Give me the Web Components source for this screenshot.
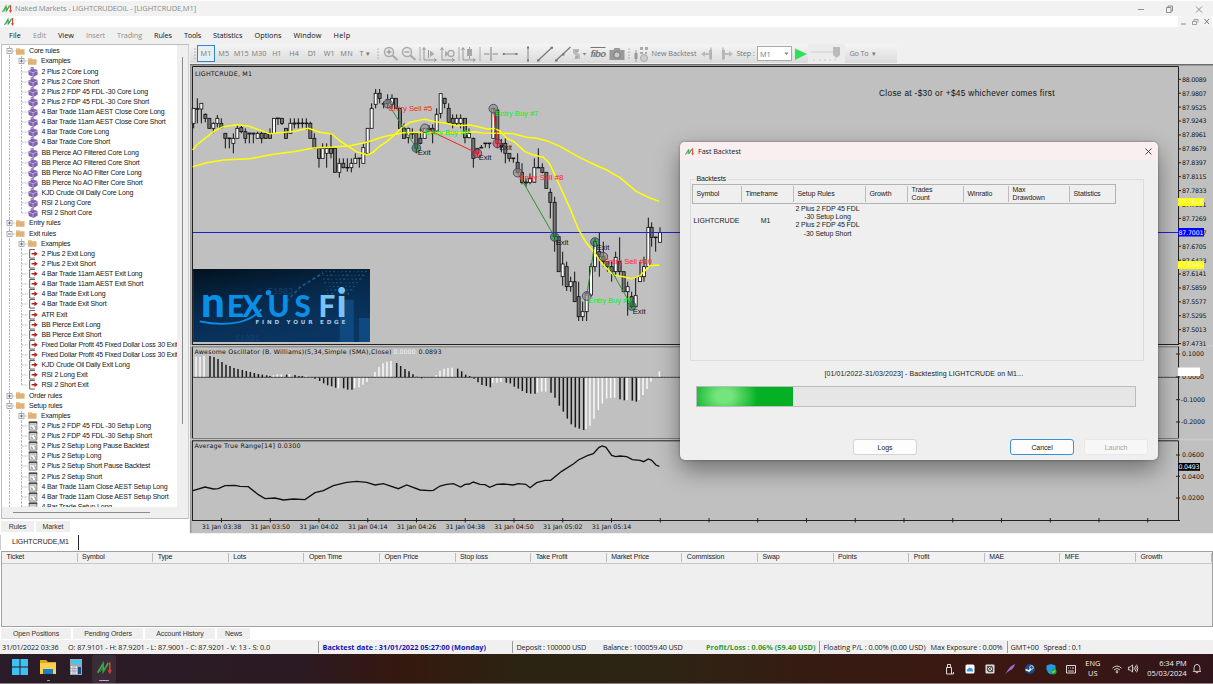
<!DOCTYPE html>
<html lang="en">
<head>
<meta charset="utf-8">
<title>Naked Markets</title>
<style>
    html, body{
        margin: 0;
        width: 1213px;
        height: 684px;
        overflow: hidden;
        background: #fff;
    }
    body{
        font-family: "Liberation Sans", Arial, sans-serif;
        font-size: 7px;
        color: #222;
    }
</style>
</head>
<body>
<trading-app></trading-app>
<script>
const UI = '"Open Sans", "Noto Sans", sans-serif'

// every element renders a style and some markup in an open root
class BaseElement extends HTMLElement{
    constructor(){
        super()
        this._shadowRoot = this.attachShadow({mode: 'open'})
    }
    connectedCallback(){
        this._shadowRoot.innerHTML = `<style>:host{display:block;box-sizing:border-box} *{box-sizing:border-box} ${this.css()}</style>${this.html()}`
        this.ready()
    }
    css(){ return '' }
    html(){ return '<slot></slot>' }
    ready(){}
}

// one line of text tracked to the width given in "w"
class FitText extends BaseElement{
    css(){
        return `:host{display:inline-block;white-space:pre;line-height:1.2;flex:none;width:${this.getAttribute('w')}px} span{display:inline-block;white-space:pre}`
    }
    html(){ return '<span><slot></slot></span>' }
    ready(){
        const span = this._shadowRoot.querySelector('span')
        const w = Number(this.getAttribute('w'))
        const n = this.textContent.length
        const real = span.getBoundingClientRect().width
        if(w && n && real) span.style.letterSpacing = ((w - real) / n).toFixed(3) + 'px'
    }
}
customElements.define('fit-text', FitText)

class AppLogo extends BaseElement{
    css(){ return ':host{width:10px;height:9px;flex:none} svg{display:block;width:100%;height:100%}' }
    html(){
        return `<svg viewBox="0 0 20 18" fill="none" stroke-width="2.2">
            <path d="M1 16 8 4 8.500 14 15 3" stroke="#3cae4b"/>
            <path d="M4 15 9 6M9 14 15 5" stroke="#2f8f3e" stroke-width="1.200"/>
            <path d="M17 2V16" stroke="#e33b2e"/><path d="M14.500 12 17 17 19.500 12" stroke="#e33b2e" stroke-width="1.200"/>
        </svg>`
    }
}
customElements.define('app-logo', AppLogo)

class TitleBar extends BaseElement{
    css(){
        return `.bar{display:flex;align-items:center;height:16px;background:#f2f2f2;border-top:1px solid #fff;padding:0 7px 0 2px;color:#8b8b8b;font:7.600px ${UI}}
        .bar fit-text{margin-left:3px}
        .mdi{display:flex;align-items:center;height:11px;background:#fff;padding:0 1px 0 4px}
        .right{margin-left:auto;display:block}
        .mdi .right{background:#f3f3f3}`
    }
    html(){
        return `<div class="bar"><app-logo></app-logo><fit-text w="181">Naked Markets - LIGHTCRUDEOIL - [LIGHTCRUDE,M1]</fit-text>
            <svg class="right" width="70" height="12" fill="none" stroke="#777" stroke-width=".8"><path d="M2 6.500h6"/><path d="M30.500 4.500h4.500v5h-4.500zM32 4.500V3h4.500v5H35M60 3.500l6 6M66 3.500l-6 6"/></svg></div>
        <div class="mdi"><app-logo></app-logo>
            <svg class="right" width="34" height="11" fill="none" stroke="#888"><path d="M3 8h5"/><path d="M14.500 5.500h4v3h-4zM16 5V3.500h4v3" stroke-width=".8"/><path d="M26.500 3l4.500 5M31 3l-4.500 5" stroke="#777"/></svg></div>`
    }
}
customElements.define('title-bar', TitleBar)

class MenuBar extends BaseElement{
    css(){
        return `:host{height:17px;background:#f0f0f0;padding:0 9px;font:7.300px ${UI};color:#111}
        nav{display:flex;gap:12px;height:17px;align-items:center}
        .off{color:#8e8e8e}`
    }
    html(){
        const items = [['File', 12], ['Edit', 13, 1], ['View', 16], ['Insert', 19, 1], ['Trading', 25, 1], ['Rules', 18], ['Tools', 17], ['Statistics', 29.5], ['Options', 27], ['Window', 28], ['Help', 17]]
        return `<nav>${items.map(i => `<fit-text w="${i[1]}" class="${i[2] ? 'off' : ''}">${i[0]}</fit-text>`).join('')}</nav>`
    }
}
customElements.define('menu-bar', MenuBar)

// ---- rules tree ----
const ICONS = {
    folder: '<path d="M0 1.500h4l1 1h5v6.500H0z" fill="#dfb377"/><path d="M1 2.500h2" stroke="#f3dcb8"/>',
    core: '<path d="M2.500.5 5.500 0 6 2 9.500 3 10 8 5.500 10.500.5 8.500 0 4 2.500 3z" fill="#7f61ad"/><path d="M.8 4.500 5 6l4.500-2M5 6v4M3 1.500l2.500.5" stroke="#d2c4ea" stroke-width=".7" fill="none"/>',
    exit: '<path d="M7 .5H1.500v9H7" stroke="#444" stroke-width=".9" fill="none"/><path d="M3.500 4.200h3V2.300L10 5 6.500 7.700V5.800h-3z" fill="#b3201c"/>',
    setup: '<path d="M1 1h8v8.500H1z" fill="#fff" stroke="#555" stroke-width=".8"/><path d="M.6 1.500h8.800" stroke="#444" stroke-width="1.800"/><path d="M3 5.500v3M3 7h1.500M4.500 7v1.500M6 5.500h1.500v3M2 4h6" stroke="#777" stroke-width=".7" fill="none"/>'
}
const names = (t, list) => list.map(n => [1, t, n])
const TREE = [
    [0, 'folder', 'Core rules', '-'], [1, 'folder', 'Examples', '+'],
    ...names('core', ['2 Plus 2 Core Long', '2 Plus 2 Core Short', '2 Plus 2 FDP 45 FDL -30 Core Long', '2 Plus 2 FDP 45 FDL -30 Core Short', '4 Bar Trade 11am AEST Close Core Long', '4 Bar Trade 11am AEST Close Core Short', '4 Bar Trade Core Long', '4 Bar Trade Core Short', 'BB Pierce AO Filtered Core Long', 'BB Pierce AO Filtered Core Short', 'BB Pierce No AO Filter Core Long', 'BB Pierce No AO Filter Core Short', 'KJD Crude Oil Daily Core Long', 'RSI 2 Long Core', 'RSI 2 Short Core']),
    [0, 'folder', 'Entry rules', '+'], [0, 'folder', 'Exit rules', '-'], [1, 'folder', 'Examples', '+'],
    ...names('exit', ['2 Plus 2 Exit Long', '2 Plus 2 Exit Short', '4 Bar Trade 11am AEST Exit Long', '4 Bar Trade 11am AEST Exit Short', '4 Bar Trade Exit Long', '4 Bar Trade Exit Short', 'ATR Exit', 'BB Pierce Exit Long', 'BB Pierce Exit Short', 'Fixed Dollar Profit 45 Fixed Dollar Loss 30 Exit', 'Fixed Dollar Profit 45 Fixed Dollar Loss 30 Exit', 'KJD Crude Oil Daily Exit Long', 'RSI 2 Long Exit', 'RSI 2 Short Exit']),
    [0, 'folder', 'Order rules', '+'], [0, 'folder', 'Setup rules', '-'], [1, 'folder', 'Examples', '+'],
    ...names('setup', ['2 Plus 2 FDP 45 FDL -30 Setup Long', '2 Plus 2 FDP 45 FDL -30 Setup Short', '2 Plus 2 Setup Long Pause Backtest', '2 Plus 2 Setup Long', '2 Plus 2 Setup Short Pause Backtest', '2 Plus 2 Setup Short', '4 Bar Trade 11am Close AEST Setup Long', '4 Bar Trade 11am Close AEST Setup Short', '4 Bar Trade Setup Long'])
]

class TreeRow extends BaseElement{
    css(){
        return `:host{height:10.125px;display:flex;align-items:center;white-space:nowrap;letter-spacing:-.18px;color:#151515}
        svg{flex:none;display:block} .lines{width:14px;height:10.125px} :host([level="1"]) .lines{width:26px}
        .icon{width:9px;height:9px} :host([icon="core"]) .icon,:host([icon="exit"]) .icon,:host([icon="setup"]) .icon{width:10.500px;height:10px}
        span{margin-left:4px;line-height:10px} :host([level="1"]) span{margin-left:3px} :host([icon="folder"][level="1"]) span{margin-left:4px}`
    }
    html(){
        const level = Number(this.getAttribute('level'))
        const sign = this.getAttribute('sign')
        const x = 7.5 + level * 12
        const box = sign ? `<rect x="${x - 2.5}" y="2.500" width="5" height="5" fill="#fff" stroke="#9a9a9a" stroke-width=".8"/><path d="M${x - 1.5} 5h3${sign === '+' ? `M${x} 3.500v3` : ''}" stroke="#3450a0" stroke-width=".8"/>` : ''
        return `<svg class="lines"><path d="M7.500 0v10.200M${x} 0V${this.hasAttribute('last') ? 5 : 10.2}M${x} 5h7" stroke="#aaa" stroke-width=".8" stroke-dasharray="2 1" fill="none"/>${box}</svg>
            <svg class="icon" viewBox="0 0 10.500 10.500">${ICONS[this.getAttribute('icon')]}</svg><span><slot></slot></span>`
    }
}
customElements.define('tree-row', TreeRow)

class RulesPanel extends BaseElement{
    css(){
        return `:host{width:189px;height:490px;background:#fff;padding-left:1px;flex:none}
        .frame{width:188px;height:475px;background:#efefef;border:1px solid #bdbdbd;border-right-color:#cfcfcf;display:grid;grid-template-columns:175px 1fr;grid-template-rows:462px 1fr}
        .tree{background:#fff;overflow:hidden;padding-top:1.300px}
        .v{width:1.500px;height:367px;background:#8a8a8a;margin:12px 0 0 4.500px}
        .h{width:137px;height:1.300px;background:#8a8a8a;margin:5px 0 0 11px}
        tab-strip{margin-top:1px}`
    }
    html(){
        return `<div class="frame"><div class="tree">${TREE.map((r, i) => `<tree-row level="${r[0]}" icon="${r[1]}" ${r[3] ? `sign="${r[3]}"` : ''} ${r[0] && !(TREE[i + 1] || [1])[0] ? 'last' : ''}>${r[2]}</tree-row>`).join('')}</div><div class="v"></div><div class="h"></div></div>
        <tab-strip tabs="Rules:33,Market:34"></tab-strip>`
    }
}

// tabs as "label:width", the first one is active
class TabStrip extends BaseElement{
    css(){
        return `:host{display:flex;height:13px;gap:2px;align-items:flex-start;color:#333}
        div{height:11.500px;background:#efefef;display:flex;align-items:center;justify-content:center;margin-top:.5px;letter-spacing:-.1px}
        div:first-child{background:#fff;height:12.500px;margin:0;border-bottom:1.300px solid #2f5fe0;border-right:1px solid #111;color:#111}`
    }
    html(){
        return this.getAttribute('tabs').split(',').map(t => t.split(':')).map(t => `<div style="width:${t[1]}px">${t[0]}</div>`).join('')
    }
}
customElements.define('tab-strip', TabStrip)
customElements.define('rules-panel', RulesPanel)

// ---- toolbar ----
const AXIS = '<path d="M2 2v12h12M.5 4 2 1.500 3.500 4M12 12.500 14.500 14 12 15.500" stroke="#999" fill="none"/>'
const TOOLS = {
    grip: '<path d="M2 2.500v12" stroke="#aaa" stroke-width="1.300" stroke-dasharray="1.300 1.700"/>',
    sep: '<path d="M2 1v14" stroke="#aaa"/>',
    zoomin: '<circle cx="6" cy="6" r="4.500" fill="#e8e8e8" stroke="#aaa" stroke-width="1.500"/><path d="M6 3.500v5M3.500 6h5" stroke="#888"/><path d="M9.500 9.500l5 4.500" stroke="#aaa" stroke-width="2.200"/>',
    zoomout: '<circle cx="6" cy="6" r="4.500" fill="#e8e8e8" stroke="#aaa" stroke-width="1.500"/><path d="M3.500 6h5" stroke="#888"/><path d="M9.500 9.500l5 4.500" stroke="#aaa" stroke-width="2.200"/>',
    shift: AXIS + '<path d="M6.500 4v8" stroke="#999"/><path d="M8 4.500 12.500 8 8 11z" fill="#aaa"/>',
    scroll: AXIS + '<path d="M5 4.500 9 8 5 11z" fill="#aaa"/><circle cx="11" cy="7.500" r="3" fill="none" stroke="#aaa" stroke-width="1.300"/>',
    candle: AXIS + '<path d="M8.500 1v12" stroke="#999"/><path d="M6 3h5v7H6z" fill="#a8a8a8"/>',
    cross: '<path d="M8 1v14M1 8h5.500M9.500 8H15" stroke="#888" stroke-width="1.100"/>',
    hline: '<path d="M2 8h12" stroke="#888"/><path d="M.8 7h2v2h-2zM13.500 7h2v2h-2z" fill="#777"/>',
    vline: '<path d="M8 2v12" stroke="#888"/><path d="M7 .5h2v2H7zM7 13.500h2v2H7z" fill="#777"/>',
    trend: '<path d="M1 14.500 15 1.500" stroke="#777" stroke-width="1.200"/><path d="M0 13.500h2.500v2H0zM13.500.8H16v2h-2.500z" fill="#777"/>',
    ray: '<path d="M1 14.500 15.500 1" stroke="#777" stroke-width="1.200"/><path d="M0 13.500h2.500v2H0zM7 7.500h2.500v2H7z" fill="#777"/>',
    shapes: '<path d="M1 3h6v3H5l3 3v4H2l2-3-3-3z" fill="#bbb"/><path d="M3 5h3M3 11h3" stroke="#999"/><path d="M10.500 7h4l-2 2.500z" fill="#888"/>',
    camera: '<path d="M.5 4h4l1-2h5l1 2h4v10H.5z" fill="#999"/><circle cx="8" cy="9" r="3.200" fill="#ccc" stroke="#777"/>',
    backtest: '<path d="M3 4v12" stroke="#999"/><path d="M1.500 7h3v6h-3z" fill="#999"/><path d="M7 1h3v3H7zM12 1h3v3h-3zM7 6h3v2H7zM12 6h2v2h-2z" fill="#aaa"/><circle cx="11" cy="12" r="3.500" fill="#ccc" stroke="#aaa"/>',
    prev: '<path d="M1 8l4-3v2h4V4h3v9H9V9H5v2z" fill="#bbb"/><path d="M11 1.500v13" stroke="#aaa"/>',
    next: '<path d="M15 8l-4-3v2H7V4H4v9h3V9h4v2z" fill="#bbb"/><path d="M5 1.500v13" stroke="#aaa"/>',
    play: '<path d="M2 2.500 14 8 2 14z" fill="#2be25a"/>'
}
class ToolBar extends BaseElement{
    css(){
        return `:host{height:20px;background:#f0f0f0}
        .bar{display:flex;align-items:center;height:19px;width:707px;background:linear-gradient(#f5f5f5,#dadada);padding-left:2px;font:7.300px ${UI};color:#777}
        .cell{flex:none;display:flex;align-items:center;justify-content:center;height:17px}
        .cell svg{display:block;width:16px;height:16px;flex:none}
        .on{border:1px solid #2f86d8;background:#e9eef3;height:17px}
        .fibo{font:italic bold 9.500px "Liberation Sans";color:#777;text-decoration:overline;letter-spacing:-.6px}
        .combo{display:flex;align-items:center;justify-content:space-between;width:35px;height:15px;border:1px solid #aaa;background:#fff;padding:0 2px}
        .combo svg{width:5px;height:5px}
        .slider{background:#ececec;height:19px}
        .slider svg{width:32px}`
    }
    html(){
        const cell = (w, body, cls = '') => `<div class="cell ${cls}" style="width:${w}px">${body}</div>`
        const icon = (w, name, vw = 16) => cell(w, `<svg viewBox="0 0 ${vw} 16" ${vw < 16 ? `style="width:${vw}px"` : ''}>${TOOLS[name]}</svg>`)
        const text = (w, t, tw) => cell(w, `<fit-text w="${tw}">${t}</fit-text>`)
        return `<div class="bar">${[
            icon(5, 'grip', 4), cell(18, '<fit-text w="11">M1</fit-text>', 'on'),
            text(17.5, 'M5', 11), text(17.5, 'M15', 15), text(18, 'M30', 15), text(17.5, 'H1', 9), text(17.5, 'H4', 10), text(17.5, 'D1', 8), text(17.5, 'W1', 11), text(17.5, 'MN', 13), text(19, 'T ▾', 11),
            icon(7, 'grip', 4), icon(18, 'zoomin'), icon(18, 'zoomout'), icon(4, 'sep', 4), icon(17, 'shift'), icon(18, 'scroll'), icon(4, 'sep', 4), icon(17, 'candle'), icon(5, 'sep', 4),
            icon(17, 'cross'), icon(20, 'hline'), icon(16, 'vline'), icon(19, 'trend'), icon(17, 'ray'), icon(17, 'shapes'),
            cell(19, '<span class="fibo">fibo</span>'), icon(18, 'camera'), icon(7, 'grip', 4), icon(17, 'backtest'), text(49, 'New Backtest', 45), icon(18, 'prev'), icon(19, 'next'), text(20, 'Step :', 18),
            cell(38, '<div class="combo"><span>M1</span><svg viewBox="0 0 5 5"><path d="M.5 1.500h4l-2 2.500z" fill="#777"/></svg></div>'),
            icon(14, 'play'), cell(37, '<svg viewBox="0 0 32 16"><path d="M1 5h24v2H1z" fill="#ddd"/><path d="M4 13v2M10 13v2M15 13v2M20 13v2M25 13v2" stroke="#ccc"/><path d="M23 1h7v8l-3.500 3L23 9z" fill="#bbb"/></svg>', 'slider'), text(36, 'Go To  ▾', 26)
        ].join('')}</div>`
    }
}
customElements.define('tool-bar', ToolBar)

// ---- chart: coordinates are thirds of a pixel measured from the chart's corner ----
// x, high, low, body top, body bottom, w = up bar, g = down bar
const CANDLES = `11 130 190 130 175 w|22 100 175 131 133 g|34 115 175 115 132 w|46 145 172 148 160 g|58 160 190 160 190 g|70 172 205 175 190 w|82 150 187 160 175 w|94 160 190 175 188 g|106 205 250 205 220 g|118 220 250 219 221 g|130 205 265 220 235 w|142 180 220 190 220 w|154 180 205 188 200 g|166 190 235 200 220 g|178 205 235 204 207 g|190 205 235 204 207 g|203 200 220 205 220 w|215 200 235 205 220 g|227 200 222 205 220 g|240 190 220 205 220 g|252 160 205 160 205 w|264 160 180 159 161 g|276 160 180 160 175 g|288 190 222 190 220 g|301 160 205 175 205 w|313 160 190 174 177 g|325 160 190 174 176 g|337 160 188 174 176 g|349 160 195 174 176 g|361 170 222 175 220 g|373 205 250 220 250 g|387 248 308 250 280 g|398 235 280 250 280 w|410 235 308 250 265 w|423 205 280 250 265 g|435 250 322 250 322 g|448 280 338 295 322 w|460 280 310 295 308 g|472 280 320 307 309 g|484 280 322 295 308 w|496 265 295 280 295 w|508 280 308 279 281 g|520 235 295 248 295 w|533 190 265 190 265 w|545 115 190 130 190 w|557 72 130 85 118 w|569 72 115 85 100 g|581 110 130 115 118 g|593 88 130 104 116 g|606 88 130 100 118 w|618 100 130 100 130 g|630 130 190 130 190 g|642 175 222 190 220 g|655 188 235 190 218 w|667 190 222 204 207 g|679 205 265 205 250 g|691 190 238 220 235 g|704 190 220 190 220 w|717 180 205 190 193 g|728 178 235 190 205 g|740 130 200 148 198 w|752 86 160 86 145 w|764 98 130 100 115 g|776 115 175 130 172 g|788 148 190 160 175 g|800 148 180 160 175 w|812 148 190 160 175 w|825 160 235 160 218 g|837 190 220 205 218 w|850 218 308 220 280 g|862 250 275 250 265 g|874 240 250 247 249 g|886 235 248 234 236 g|898 235 250 234 236 g|910 130 220 130 220 w|922 135 250 135 235 g|934 222 262 235 245 g|946 220 295 235 265 g|958 265 290 265 280 g|970 280 293 279 281 g|983 265 325 292 322 g|996 295 358 322 352 g|1008 340 365 351 354 g|1020 325 358 340 352 w|1033 280 352 308 352 w|1045 250 308 307 309 g|1057 295 325 308 322 g|1069 322 370 322 370 g|1081 370 460 382 412 g|1094 395 560 412 515 g|1106 515 620 515 620 g|1118 560 662 597 635 w|1130 590 678 605 665 g|1142 635 680 650 665 w|1154 620 710 650 710 g|1166 650 768 695 755 g|1178 710 768 740 755 w|1190 680 768 685 740 w|1203 595 695 605 690 w|1215 520 620 530 605 w|1228 503 635 560 575 g|1240 530 605 575 590 g|1252 590 620 590 605 g|1265 590 650 605 620 g|1277 560 635 577 620 w|1289 517 635 590 620 g|1301 620 680 620 680 g|1313 650 752 665 680 w|1325 680 730 695 725 g|1337 635 725 692 725 w|1350 590 650 635 650 w|1362 575 650 605 635 w|1375 458 605 487 605 w|1385 472 545 487 517 g|1397 517 560 516 518 g|1410 487 532 503 532 w`
const FAST = '8,255 20,240 45,220 75,197 100,185 142,179 175,183 205,194 240,206 270,203 315,199 355,190 390,202 425,207 450,228 470,241 500,260 530,269 548,263 570,243 590,230 615,208 635,188 660,172 705,163 735,170 770,175 800,182 840,180 870,187 895,193 912,190 930,198 950,220 972,230 1005,260 1030,270 1060,277 1078,295 1090,320 1115,375 1140,430 1165,492 1190,535 1215,565 1240,600 1270,630 1300,635 1325,641 1350,632 1380,602 1408,600'
const SLOW = '8,305 50,293 100,285 180,281 250,268 310,260 370,249 430,246 480,242 530,232 580,215 640,203 690,202 750,203 820,203 855,200 880,204 925,205 970,206 1010,217 1040,220 1075,229 1110,244 1170,278 1210,297 1250,315 1290,338 1340,380 1380,399 1408,409'
const ATR = '9,1277 45,1266 70,1272 85,1271 105,1262 135,1261 150,1264 175,1265 205,1289 225,1301 255,1299 280,1305 310,1302 345,1304 375,1283 400,1277 430,1262 470,1252 500,1249 530,1252 555,1260 580,1256 625,1271 650,1260 690,1275 720,1277 730,1276 750,1263 770,1258 790,1256 812,1266 825,1258 838,1257 850,1251 870,1258 885,1259 899,1267 920,1258 940,1257 970,1260 985,1256 1007,1258 1020,1268 1040,1253 1065,1246 1082,1246 1115,1219 1150,1197 1165,1185 1192,1172 1210,1166 1227,1147 1237,1143 1248,1147 1265,1171 1277,1175 1290,1173 1310,1175 1327,1184 1350,1186 1361,1190 1375,1182 1385,1186 1398,1200 1408,1204'
// x, end y of the bar, w or k (rising, falling)
const AO = `18 875 w|30 875 w|42 873 w|60 873 k|72 876 k|84 882 k|96 891 k|108 899 k|120 903 k|132 909 k|144 912 k|157 915 k|169 918 k|181 921 k|193 924 k|205 927 k|217 929 k|230 931 k|240 933 k|250 931 w|262 928 w|274 928 w|290 929 k|298 927 w|315 930 k|327 933 k|337 933 k|348 932 w|375 941 k|389 948 k|401 955 k|413 961 k|425 964 k|437 968 k|445 970 w|461 970 k|473 974 k|486 974 k|494 969 w|507 967 w|519 959 w|531 951 w|555 921 w|567 906 w|579 895 w|591 890 w|603 888 w|620 894 k|632 903 k|645 912 k|657 919 k|669 928 k|681 935 k|695 940 k|738 930 w|750 917 w|762 911 w|774 909 w|786 908 w|803 911 k|815 919 k|827 929 k|839 933 k|852 941 k|864 952 k|876 960 k|889 963 k|901 967 k|908 954 w|921 953 w|933 951 w|949 953 k|961 955 k|973 965 k|985 971 k|997 978 k|1010 984 k|1022 986 k|1035 986 k|1042 983 w|1055 980 w|1067 980 w|1083 983 k|1095 998 k|1108 1022 k|1120 1040 k|1132 1061 k|1144 1078 k|1156 1087 k|1168 1091 k|1181 1095 k|1188 1092 w|1200 1082 w|1212 1061 w|1225 1035 w|1237 1016 w|1250 1001 w|1262 999 w|1274 998 w|1290 1003 k|1303 1006 k|1311 1005 w|1327 1007 k|1339 1010 k|1347 1005 w|1359 990 w|1371 972 w|1383 950 w|1396 935 w|1408 919 w`
// trade lines: entry x y, exit x y, colour
const TRADES = [[594, 116, 679, 249, '#2f8f2f'], [705, 190, 862, 265, '#f02020'], [910, 131, 922, 235, '#f02020'], [983, 323, 1094, 516, '#2f8f2f'], [1190, 693, 1215, 531, '#2f8f2f'], [1240, 575, 1325, 723, '#2f8f2f']]
const LABELS = [[597, 137, 'Entry Sell #5', '#ff2020', 130], [706, 211, 'Entry Buy #6', '#00f020', 130], [916, 152, 'Entry Buy #7', '#00f020', 129], [988, 344, 'Entry Sell #8', '#ff2020', 132], [1195, 715, 'Entry Buy #9', '#00f020', 130], [1242, 597, 'Entry Sell #10', '#ff2020', 144],
    [683, 271, 'Exit', '#111', 39], [866, 286, 'Exit', '#111', 38], [928, 255, 'Exit', '#111', 38], [1097, 539, 'Exit', '#111', 38], [1220, 554, 'Exit', '#111', 38], [1328, 746, 'Exit', '#111', 39]]

class NexusLogo extends BaseElement{
    css(){ return ':host{position:absolute;left:2.500px;top:205px;width:177.500px;height:73px} svg{display:block}' }
    html(){
        let dots = ''
        for(let r = 0; r < 7; r++) for(let c = 0; c < 12 - r; c++) dots += `<path d="M${384 + c * 12 + r * 3} ${8 + r * 11}h${5 + (c * r) % 4}" opacity="${.2 + ((c + r) % 4) * .12}"/>`
        return `<svg width="177.500" height="73" viewBox="0 0 532 219">
            <defs><linearGradient id="bg" x1="0" y1="0" x2=".4" y2="1"><stop offset="0" stop-color="#03121f"/><stop offset=".5" stop-color="#062a4c"/><stop offset="1" stop-color="#0a3562"/></linearGradient></defs>
            <path fill="url(#bg)" d="M0 0h532v219H0z"/>
            <g stroke="#2f78a8" stroke-width="4">${dots}</g>
            <path d="M270 110 320 55 390 12" stroke="#1d5681" stroke-width="5" stroke-dasharray="10 7" fill="none"/>
            <path d="M440 92h42v127h-42zM498 147h34v72h-34z" fill="#10518a" opacity=".75"/>
            <g font-family="Liberation Mono" font-size="25" fill="#12436c"><text x="225" y="76">F1983</text><text x="125" y="216">41391</text></g>
            <g font-family="Lato, sans-serif" font-weight="900" fill="#0b8ee6">
                <text y="144"><tspan x="24" font-size="126" textLength="76">n</tspan><tspan font-size="89" x="102 148 223 304">EXUS</tspan></text>
                <text y="144" fill="#79c2f7"><tspan font-size="89" x="376">F</tspan><tspan font-size="118" x="430">i</tspan></text></g>
            <circle cx="226" cy="71" r="8" fill="#0b8ee6"/>
            <path d="M20 157Q85 171 140 159Q180 149 205 121" stroke="#0b8ee6" stroke-width="5" fill="none"/>
            <text x="187" y="164" font-family="DejaVu Sans" font-size="17" font-weight="bold" fill="#a6c8e4" textLength="270">FIND YOUR EDGE</text>
        </svg>`
    }
}
customElements.define('nexus-logo', NexusLogo)

class PriceChart extends BaseElement{
    css(){
        return `:host{position:relative;width:1023px;height:469px;background:#c0c0c0;overflow:hidden}
        .plot{display:block}`
    }
    html(){
        const candles = CANDLES.split('|').map(c => {
            const [x, hi, lo, top, bottom, kind] = c.split(' ')
            return `<path d="M${x} ${hi}V${lo}" stroke="#111" stroke-width="3"/><rect x="${x - 4.5}" y="${top}" width="9" height="${bottom - top}" fill="${kind === 'w' ? '#fff' : '#777'}" stroke="#111" stroke-width="2.500"/>`
        }).join('')
        const bars = AO.split('|').map(b => {
            const [x, y, kind] = b.split(' ')
            return `<path d="M${x} 937V${y}" stroke="${kind === 'w' ? '#f8f8f8' : '#1a1a1a'}" stroke-width="4.500"/>`
        }).join('')
        const dot = (x, y, c) => `<circle cx="${x}" cy="${y}" r="13" fill="${c}" fill-opacity=".6" stroke="#303a80" stroke-width="2.500"/>`
        const trades = TRADES.map(([a, b, c, d, col]) => `<path d="M${a} ${b}L${c} ${d}" stroke="${col}" stroke-width="3"/>` + dot(a, b, '#8f8878') + dot(c, d, col === '#2f8f2f' ? '#217a35' : '#ee3040')).join('')
        const labels = LABELS.map(([x, y, t, c, w]) => `<text x="${x}" y="${y}" fill="${c}" textLength="${w}" font-family="Liberation Sans" font-size="23">${t}</text>`).join('')
        // everything below this point is in page pixels
        const small = (x, y, t, w, c = '#111', extra = '') => `<text x="${x}" y="${y}" fill="${c}" textLength="${w}" ${extra}>${t}</text>`
        let axis = ''
        for(let i = 0; i < 20; i++){
            const y = 79.3 + i * 13.91
            axis += `<path d="M1178 ${y}h3" stroke="#222"/>` + small(1182, y + 2.4, (88.0089 - i * .0282).toFixed(4), 24.5)
        }
        for(const [y, t, w] of [[354, '0.1000', 22], [377, '0.0000', 22], [399.700, '-0.1000', 24], [422, '-0.2000', 24], [455, '0.0600', 22], [476.300, '0.0400', 22], [498, '0.0200', 22]]){
            axis += `<path d="M1176 ${y}h4" stroke="#222"/>` + small(t[0] === '-' ? 1181 : 1182, y + 2.4, t, w)
        }
        const times = ['03:38', '03:50', '04:02', '04:14', '04:26', '04:38', '04:50', '05:02', '05:14']
        for(let i = 0; i < 20; i++){
            const x = 221.500 + i * 48.75
            axis += `<path d="M${x} 518v4.500" stroke="#222"/>`
            if(times[i]) axis += small(x - 19.7, 528.500, '31 Jan ' + times[i], 39.500)
        }
        const tag = (y, h, w, bg, fg, t) => `<path d="M1178 ${y}h${w}v${h}h-${w}z" fill="${bg}"/>${t ? small(1178.500, y + h / 2 + 2.4, t, w - 1, fg) : ''}`
        return `<svg class="plot" width="1023" height="469" viewBox="190 64 1023 469" font-family="DejaVu Sans" font-size="6.300">
            <path d="M190 64h1023v1.500H190z" fill="#6e6e6e"/><path d="M190 65h1.500v468H190z" fill="#999"/>
            <path d="M192.500 520V66.500H1178.500V520.500" fill="none" stroke="#222"/>
            <g transform="translate(190 65) scale(.33333)">${candles}</g>
            <path d="M193 232.500H1178" stroke="#2020d0" stroke-width="1.100"/>
            <g transform="translate(190 65) scale(.33333)"><g fill="none" stroke="#ffff00" stroke-width="4.500" stroke-linejoin="round"><polyline points="${FAST}"/><polyline points="${SLOW}"/></g>${trades}${labels}
            ${bars}<path d="M9 937H2964" stroke="#222" stroke-width="2.500"/><path d="M9 937H2964" stroke="#999" stroke-width="2" stroke-dasharray="3 7"/>
            <polyline points="${ATR}" fill="none" stroke="#111" stroke-width="4"/></g>
            <path d="M190 345h1023v1.500H190zM190 438.500h1023v2H190z" fill="#c9c9c9"/>
            <path d="M192 344.500h986M192 440.800h986M192 520.500h988" stroke="#222"/><path d="M192 346.800h986M192 438.600h986" stroke="#777"/>
            ${axis}
            ${small(195, 75.8, 'LIGHTCRUDE, M1', 57)}
            ${small(194.500, 354.400, 'Awesome Oscillator (B. Williams)(5,34,Simple (SMA),Close)', 197)}${small(393.500, 354.400, '0.0000', 22, '#f4f4f4')}${small(418.500, 354.400, '0.0893', 23)}
            ${small(194.500, 448, 'Average True Range[14] 0.0300', 106)}
            <text x="879" y="95.800" font-family="Liberation Sans" font-size="8.300" fill="#111" textLength="175.500">Close at -$30 or +$45 whichever comes first</text>
            ${tag(198, 8, 26, '#ffff00', '#f6f6d8', '87.7616')}${tag(261, 8, 26, '#ffff00', '#f6f6d8', '87.6341')}${tag(228, 8.500, 26, '#0000ff', '#fff', '87.7001')}
            ${tag(367.500, 8.500, 22, '#fff', '#fff', '')}${tag(463, 7.800, 22, '#000', '#fff', '0.0493')}
        </svg><nexus-logo></nexus-logo>`
    }
}
customElements.define('price-chart', PriceChart)

// ---- dialog ----
class PushButton extends BaseElement{
    css(){
        return `:host{display:flex;width:64px;height:16px;align-items:center;justify-content:center;background:#fdfdfd;border:1px solid #d4d4d4;border-radius:3px;color:#222}
        :host([primary]){border-color:#3a8fd6} :host([disabled]){color:#a5a5a5;background:#f7f7f7;border-color:#e8e8e8}`
    }
}
customElements.define('push-button', PushButton)

class BacktestDialog extends BaseElement{
    css(){
        return `:host{position:absolute;left:680px;top:142px;width:478px;height:318px;background:#efefef;border-radius:5px;box-shadow:0 10px 24px rgba(0,0,0,.42),0 0 3px rgba(0,0,0,.35);letter-spacing:-.1px;color:#1a1a1a}
        header{display:flex;align-items:center;height:18px;background:#f9eff1;border-radius:5px 5px 0 0;padding:0 5px;font:7.200px ${UI};letter-spacing:0}
        header fit-text{margin-left:4px;flex:1} header svg{display:block}
        app-logo{width:9px}
        fieldset{margin:15px 14px 0 9.500px;height:186px;border:1px solid #dcdcdc;padding:1px 0 0 1px;min-width:0}
        legend{padding:0 2px;margin-left:3px;line-height:8px;height:8px}
        .head,.row{display:grid;grid-template-columns:48px 52px 72px 42px 56px 45px 61px 48px}
        .head{height:20px;width:424px;border:1px solid #b3b3b3;align-items:center;line-height:8px}
        .head div{height:16px;display:flex;align-items:center;padding-left:4px;border-left:1px solid #bbb}
        .head div:first-child{border:0}
        .row{line-height:8.200px;padding-top:1px;align-items:center;text-align:center}
        .row div:first-child{text-align:left;padding-left:2px;white-space:nowrap}
        .status{text-align:center;margin:8px 0 0 4px;line-height:10px;height:10px}
        .progress{margin:7px 22px 0 16px;height:21px;background:#e6e6e6;border:1px solid #bcbcbc}
        .fill{width:96px;height:19px;background:radial-gradient(ellipse 34px 26px at 27px 9px,#74e47c 25%,rgba(6,176,37,0) 100%),#06b025}
        footer{display:flex;margin-top:32px;padding-left:173px}
        .cancel{margin-left:93px} .launch{margin-left:10px}`
    }
    html(){
        const cols = ['Symbol', 'Timeframe', 'Setup Rules', 'Growth', 'Trades<br>Count', 'Winratio', 'Max<br>Drawdown', 'Statistics']
        return `<header><app-logo></app-logo><fit-text w="43">Fast Backtest</fit-text><svg width="9" height="9"><path d="M1.500 1.500l6 6M7.500 1.500l-6 6" stroke="#333" stroke-width=".9"/></svg></header>
        <fieldset><legend>Backtests</legend>
            <div class="head">${cols.map(c => `<div>${c}</div>`).join('')}</div>
            <div class="row"><div><fit-text w="45">LIGHTCRUDE</fit-text></div><div>M1</div><div>2 Plus 2 FDP 45 FDL<br>-30 Setup Long<br>2 Plus 2 FDP 45 FDL<br>-30 Setup Short</div></div>
        </fieldset>
        <div class="status"><fit-text w="193">[01/01/2022-31/03/2023] - Backtesting LIGHTCRUDE on M1...</fit-text></div>
        <div class="progress"><div class="fill"></div></div>
        <footer><push-button>Logs</push-button><push-button class="cancel" primary>Cancel</push-button><push-button class="launch" disabled>Launch</push-button></footer>`
    }
}
customElements.define('backtest-dialog', BacktestDialog)

// ---- bottom panel ----
class PositionsPanel extends BaseElement{
    css(){
        return `:host{height:106px;background:#fff}
        .doc{height:15px;margin-top:1px;width:79px;border-right:1px solid #222;display:flex;align-items:center;padding-left:11px;border-left:1px solid #ccc}
        .table{margin:1px 0 0 1px;height:76px;background:#efefef;border:1px solid #a2a2a2}
        .head{display:grid;grid-template-columns:repeat(16,75.600px);height:12px;border-bottom:1px solid #c8c8c8;align-items:center;overflow:hidden;color:#222;background:#f1f1f1}
        .head div{height:8.500px;line-height:8.500px;padding-left:4.500px;border-right:1px solid #bbb;letter-spacing:-.12px}
        tab-strip{margin-left:1px}`
    }
    html(){
        const cols = ['Ticket', 'Symbol', 'Type', 'Lots', 'Open Time', 'Open Price', 'Stop loss', 'Take Profit', 'Market Price', 'Commission', 'Swap', 'Points', 'Profit', 'MAE', 'MFE', 'Growth']
        return `<div class="doc"><fit-text w="57">LIGHTCRUDE,M1</fit-text></div>
        <div class="table"><div class="head">${cols.map(c => `<div>${c}</div>`).join('')}</div></div>
        <tab-strip tabs="Open Positions:70,Pending Orders:70,Account History:70,News:33"></tab-strip>`
    }
}
customElements.define('positions-panel', PositionsPanel)

class StatusBar extends BaseElement{
    css(){
        return `:host{display:flex;height:14px;align-items:center;background:#f0f0f0;padding-left:2px;font:7.300px ${UI};color:#222}
        i{width:1px;height:12px;background:#999} .blue{color:#1414b4;font-weight:bold} .green{color:#2f9a35;font-weight:bold}`
    }
    html(){
        const item = (gap, w, t, cls = '') => `<fit-text class="${cls}" w="${w}" style="margin-left:${gap}px">${t}</fit-text>`
        const sep = gap => `<i style="margin-left:${gap}px"></i>`
        return item(0, 56.500, '31/01/2022 03:36') + item(9.500, 202, 'O: 87.9101 - H: 87.9201 - L: 87.9001 - C: 87.9201 - V: 13 - S: 0.0') + sep(48) + item(3.500, 163.500, 'Backtest date : 31/01/2022 05:27:00 (Monday)', 'blue') + sep(26) + item(3.500, 69.500, 'Deposit : 100000 USD') + item(17, 79.500, 'Balance : 100059.40 USD') + item(23.500, 109.500, 'Profit/Loss : 0.06% (59.40 USD)', 'green') + sep(3.500) + item(3.500, 102, 'Floating P/L : 0.00% (0.00 USD)') + item(5, 72, 'Max Exposure : 0.00%') + sep(4) + item(3, 28.500, 'GMT+00') + item(4.500, 38, 'Spread : 0.1')
    }
}
customElements.define('status-bar', StatusBar)

class TaskBar extends BaseElement{
    css(){
        return `:host{display:flex;height:30px;align-items:center;color:#f2f2f2;font:7.400px ${UI};border-bottom:1px solid #8c8085;background:linear-gradient(90deg,#2a1c28 0,#2b1a24 24%,#35180f 33%,#2b2412 43%,#2d2414 54%,#361b12 68%,#3b1711 84%,#32151a 100%)}
        svg{display:block;flex:none} .apps{display:flex;align-items:center;padding-left:8px;gap:4px}
        .apps div{width:24px;height:28px;display:grid;grid-template-rows:25px 2px;justify-items:center;align-items:center}
        .apps .active{background:rgba(255,255,255,.08);border-radius:3px} .apps b{width:3px;height:1.500px;background:#aaa;border-radius:1px} .apps .active b{width:10px;background:#d9a0dd}
        .apps app-logo{width:15px;height:15px}
        .tray{margin-left:auto;display:flex;align-items:center;gap:8.300px}
        .stack{display:flex;flex-direction:column;align-items:center;gap:1px} .clock{align-items:flex-end}`
    }
    html(){
        const tray = body => `<svg width="12" height="12" viewBox="0 0 12 12" fill="none" stroke="#eee" stroke-width=".9">${body}</svg>`
        return `<div class="apps">
            <div><svg width="16" height="16"><path d="M0 0h7.500v7.500H0zM8.500 0H16v7.500H8.500zM0 8.500h7.500V16H0zM8.500 8.500H16V16H8.500z" fill="#3fc0f5"/></svg></div>
            <div><svg width="16" height="16"><path d="M0 1h6l2 2h8v12H0z" fill="#e2a51c"/><path d="M0 4h16v11H0z" fill="#ffd04f"/><path d="M3 10h10v5H3z" fill="#1580c8"/></svg><b></b></div>
            <div><svg width="12" height="16"><path d="M0 0h12v16H0z" fill="#9da7b0"/><path d="M1 1h10v4H1z" fill="#43c8ee"/><path d="M1 7h6v8H1z" fill="#e6e9ec"/><path d="M8 8h3v7H8z" fill="#154d86"/><path d="M1 9.500h6M1 12h6M3 7v8M5 7v8" stroke="#8a949c" stroke-width=".7"/></svg></div>
            <div class="active"><app-logo></app-logo><b></b></div></div>
        <div class="tray">
            ${tray('<path d="M3.500 4.500h5v6.500h-5zM4.500 4.500v-3h3v3M8.500 11h2V9"/>')}
            ${tray('<rect x="1.500" y="1.500" width="9" height="9" rx="1.500" fill="#fff" stroke="none"/><path d="M3 8.500q-1-2 1-2.500 1-2.500 3-1 2 0 2 3.500z" fill="#3a9df0" stroke="none"/>')}
            ${tray('<rect x="1.500" y="1.500" width="9" height="9" rx="1" fill="#d9d9d9" stroke="none"/><circle cx="6" cy="6" r="2.800" stroke="#333"/><path d="M3 3l6 6M4 8l4-5" stroke="#444"/>')}
            ${tray('<path d="M1 11 4 7Q6 3 11 1 10 6 5 8z" fill="#a46ad6" stroke="none"/>')}
            ${tray('<circle cx="6" cy="6" r="5" fill="#174b8b" stroke="none"/><circle cx="7.500" cy="4.500" r="1.800"/><path d="M1.500 6.500 5 8l2-2" stroke-width="1.800"/>')}
            ${tray('<path d="M6 1 10.500 2.500v4Q9.500 10 6 11.500 2.500 10 1.500 6.500v-4z" fill="#1c9be8" stroke="none"/><circle cx="8.500" cy="8.500" r="3" fill="#24a83c" stroke="none"/><path d="M7 8.500l1 1 2-2"/>')}
            ${tray('<path d="M1.500 2.500h9v7.500h-9zM3 5h1M5 5h1M7 5h2M3 8h6"/>')}
            <div class="stack"><fit-text w="15">ENG</fit-text><fit-text w="9.500">US</fit-text></div>
            <svg style="margin-left:3px" width="10" height="10" viewBox="0 0 12 12" fill="none" stroke="#eee"><path d="M.5 5Q6 0 11.500 5M2.500 7Q6 3.500 9.500 7M4.500 8.800Q6 7 7.500 8.800"/><circle cx="6" cy="10" r=".8"/></svg>
            <svg style="margin-left:-3px" width="12" height="11" viewBox="0 0 12 12" fill="none" stroke="#eee" stroke-width=".9"><path d="M1 4.500h2L5.500 2v8L3 7.500H1zM7 4.500q1 1.500 0 3M8.500 3q2 3 0 6M10 1.800q2.500 4.200 0 8.400"/></svg>
            <div class="stack clock"><fit-text w="27.500">6:34 PM</fit-text><fit-text w="39.500">05/03/2024</fit-text></div>
            <svg style="margin:0 11px 0 -3px" width="10" height="11" viewBox="0 0 12 12" fill="none" stroke="#eee"><path d="M2.500 8.500V5q0-3.500 3.500-4 3.500.5 3.500 4v3.500l1 1h-9zM4.500 10.500q1.500 1.500 3 0"/></svg>
        </div>`
    }
}
customElements.define('task-bar', TaskBar)

class TradingApp extends BaseElement{
    css(){
        return `:host{display:flex;flex-direction:column;width:1213px;height:684px;position:relative}
        .work{display:flex;height:490px;background:#f0f0f0} .main{flex:1;min-width:0;padding-left:1px;height:490px}`
    }
    html(){
        return `<title-bar></title-bar><menu-bar></menu-bar>
        <div class="work"><rules-panel></rules-panel><div class="main"><tool-bar></tool-bar><price-chart></price-chart></div></div>
        <positions-panel></positions-panel><status-bar></status-bar><task-bar></task-bar>
        <backtest-dialog></backtest-dialog>`
    }
}
customElements.define('trading-app', TradingApp)
</script>
</body>
</html>
